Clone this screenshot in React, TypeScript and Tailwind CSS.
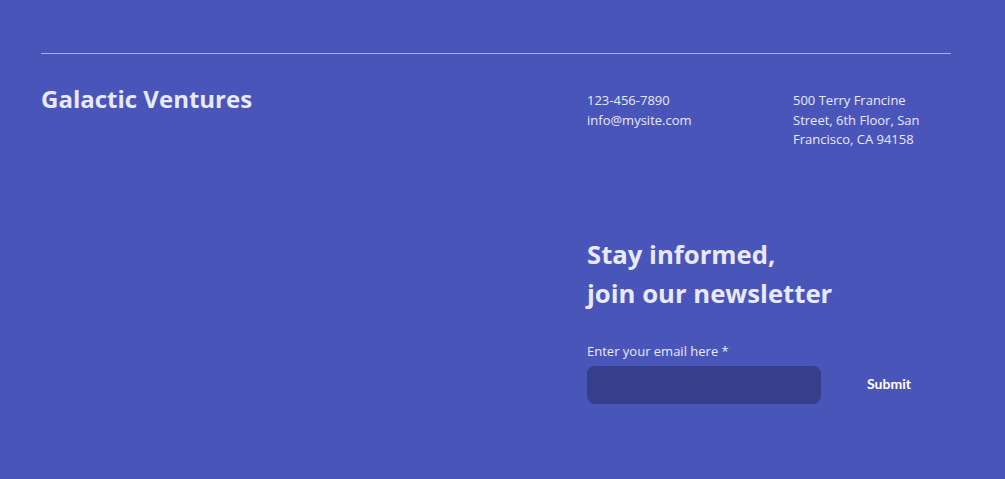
export default function App() {
  return (
    <div className="w-full h-[479px] bg-[#4a55ba] text-[#e8e9fb]" style={{ fontFamily: '"Open Sans", sans-serif' }}>
      <div className="ml-[41px] mr-[54px] pt-[53px]">
        <div className="h-px bg-[#a9b0f0]" />
        <div className="flex pt-[29px]">
          <div className="w-[546px] text-[24px] font-bold leading-[32px]">Galactic Ventures</div>
          <div className="w-[206px] text-[13px] leading-[19.5px] pt-[8px]">
            <div>123-456-7890</div>
            <div>info@mysite.com</div>
          </div>
          <div className="w-[130px] text-[13px] leading-[19.5px] pt-[8px]">
            500 Terry Francine Street, 6th Floor, San Francisco, CA 94158
          </div>
        </div>
        <div className="ml-[546px] pt-[85px]">
          <div className="text-[25.7px] font-bold leading-[39px]">
            Stay informed,
            <br />
            join our newsletter
          </div>
          <div className="pt-[28px] text-[13px] leading-[20px]">Enter your email here *</div>
          <div className="flex items-center mt-[5px]">
            <div className="w-[234px] shrink-0 h-[38px] rounded-[8px] bg-[#363f8c]" />
            <button
              className="w-[136px] shrink-0 h-[38px] pb-[2px] text-white text-[14px] font-bold"
              style={{ fontFamily: 'Lato, sans-serif' }}
            >
              Submit
            </button>
          </div>
        </div>
      </div>
    </div>
  );
}
